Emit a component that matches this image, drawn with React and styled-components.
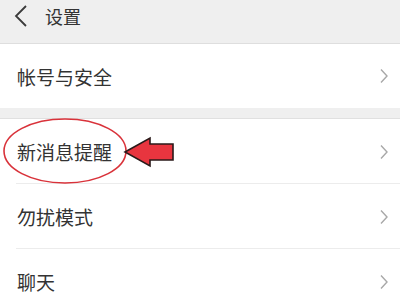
import React from "react";
import styled, { createGlobalStyle } from "styled-components";

const Global = createGlobalStyle`
  html, body { margin: 0; padding: 0; background: #f0f0f0; }
  body { font-family: "Noto Sans CJK SC", "Noto Sans", sans-serif; }
`;

const Page = styled.div`
  position: relative;
  width: 400px;
  height: 300px;
  overflow: hidden;
  background: #efefef;
`;

const Header = styled.div`
  height: 32px;
  padding-bottom: 11px;
  display: flex;
  align-items: center;
  gap: 17px;
  padding-left: 14px;
  border-bottom: 1px solid #dedede;
  background: #efefef;
  color: #333;
  font-size: 18px;
`;

const Group = styled.div`
  background: #fff;
  margin-top: ${(p) => p.$gap || 0}px;
  border-top: ${(p) => (p.$gap ? "1px solid #e0e0e0" : "none")};
`;

const Row = styled.div`
  height: ${(p) => p.$h || 64}px;
  display: flex;
  align-items: center;
  justify-content: space-between;
  padding: 0 11px 0 17px;
  font-size: 19px;
  color: #333;
  position: relative;
  &::after {
    content: "";
    display: ${(p) => (p.$divider ? "block" : "none")};
    position: absolute;
    left: 16px;
    right: 0;
    bottom: 0;
    height: 1px;
    background: #ececec;
  }
`;

const Overlay = styled.svg`
  position: absolute;
  left: 0;
  top: 0;
  pointer-events: none;
`;

const Chevron = () => (
  <svg width="10" height="16" viewBox="0 0 10 16">
    <path d="M2 1.5 L8 8 L2 14.5" fill="none" stroke="#a8a8a8" strokeWidth="1.4" />
  </svg>
);

const Back = () => (
  <svg width="14" height="22" viewBox="0 0 14 22">
    <path d="M12 1 L2 11 L12 21" fill="none" stroke="#3a3a3a" strokeWidth="1.8" />
  </svg>
);

export default function App() {
  return (
    <>
      <Global />
      <Page>
        <Header>
          <Back />
          <span>设置</span>
        </Header>
        <Group>
          <Row $h={64}>
            <span>帐号与安全</span>
            <Chevron />
          </Row>
        </Group>
        <Group $gap={10}>
          <Row $h={65} $divider>
            <span>新消息提醒</span>
            <Chevron />
          </Row>
          <Row $h={65} $divider>
            <span>勿扰模式</span>
            <Chevron />
          </Row>
          <Row $h={65}>
            <span>聊天</span>
            <Chevron />
          </Row>
        </Group>
        <Overlay width="400" height="300" viewBox="0 0 400 300">
          <ellipse cx="65" cy="151" rx="61" ry="32" fill="none" stroke="#d9323a" strokeWidth="1.6" />
          <path
            d="M125 152 L150 138 L150 144 L173 144 L173 160 L150 160 L150 166 Z"
            fill="#e8353f"
            stroke="#2a1a1a"
            strokeWidth="1.6"
            strokeLinejoin="miter"
          />
        </Overlay>
      </Page>
    </>
  );
}
